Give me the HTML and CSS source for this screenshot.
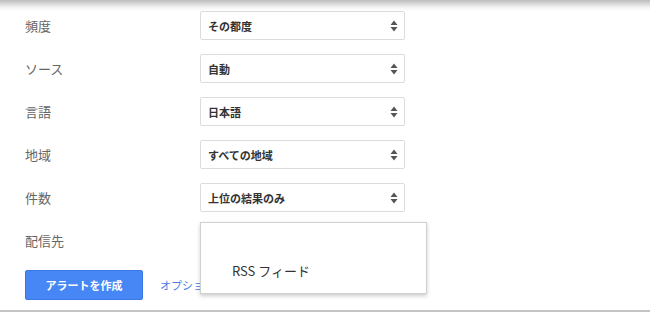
FILE: index.html
```html
<!doctype html>
<html>
 <head>
  <meta charset="UTF-8">
  <title>アラートを作成</title>
  <link rel="stylesheet" href="styles.css">
 </head>
 <body>
  <div class="shade"></div>
  <div class="form">
   <div class="row">
    <div class="label">頻度</div>
    <div class="select"><span>その都度</span><svg class="arrows" width="8" height="12" viewBox="0 0 8 12"><path d="M4 0.5L7.5 5H0.5Z M4 11.5L7.5 7H0.5Z" fill="#555"/></svg></div>
   </div>
   <div class="row">
    <div class="label">ソース</div>
    <div class="select"><span>自動</span><svg class="arrows" width="8" height="12" viewBox="0 0 8 12"><path d="M4 0.5L7.5 5H0.5Z M4 11.5L7.5 7H0.5Z" fill="#555"/></svg></div>
   </div>
   <div class="row">
    <div class="label">言語</div>
    <div class="select"><span>日本語</span><svg class="arrows" width="8" height="12" viewBox="0 0 8 12"><path d="M4 0.5L7.5 5H0.5Z M4 11.5L7.5 7H0.5Z" fill="#555"/></svg></div>
   </div>
   <div class="row">
    <div class="label">地域</div>
    <div class="select"><span>すべての地域</span><svg class="arrows" width="8" height="12" viewBox="0 0 8 12"><path d="M4 0.5L7.5 5H0.5Z M4 11.5L7.5 7H0.5Z" fill="#555"/></svg></div>
   </div>
   <div class="row">
    <div class="label">件数</div>
    <div class="select"><span>上位の結果のみ</span><svg class="arrows" width="8" height="12" viewBox="0 0 8 12"><path d="M4 0.5L7.5 5H0.5Z M4 11.5L7.5 7H0.5Z" fill="#555"/></svg></div>
   </div>
   <div class="row delivery">
    <div class="label">配信先</div>
    <div class="select"></div>
    <!-- 開いたドロップダウン -->
    <ul class="menu">
     <li></li>
     <li>RSS フィード</li>
    </ul>
   </div>
   <div class="actions">
    <div class="button">アラートを作成</div>
    <a class="link" href="#">オプションを表示</a>
   </div>
  </div>
 </body>
</html>
```

FILE: styles.css
```css
*{
	margin:0;
	padding:0;
	box-sizing:border-box;
}
ul{
	list-style:none;
}
body{
	font-family:"Noto Sans CJK JP","Liberation Sans",sans-serif;
	background:#fff;
	color:#333;
}
.shade{
	height:11px;
	background:linear-gradient(to bottom,rgba(0,0,0,0.26),rgba(0,0,0,0.04) 70%,rgba(0,0,0,0));
}
.form{
	padding:0 25px 10px;
	border-bottom:2px solid #c4c4c4;
}
.row{
	position:relative;
	display:grid;
	grid-template-columns:175px 205px;
	align-items:center;
	height:29px;
	margin-bottom:14px;
}
.label{
	font-size:13px;
	color:#666;
}
.select{
	display:flex;
	align-items:center;
	justify-content:space-between;
	height:29px;
	padding:0 6px 0 7px;
	border:1px solid #dcdcdc;
	border-radius:2px;
	font-size:11px;
	font-weight:bold;
	color:#333;
}
.arrows{
	display:block;
}
.delivery{
	margin-bottom:15px;
}
.menu{
	position:absolute;
	left:175px;
	top:-4px;
	width:227px;
	height:72px;
	background:#fff;
	border:1px solid #d0d0d0;
	box-shadow:0 2px 4px rgba(0,0,0,0.2);
	z-index:1;
	padding-top:4px;
}
.menu>li{
	height:30px;
	line-height:30px;
	padding-left:31px;
	font-size:13px;
	color:#333;
}
.menu>li:last-child{
	margin-top:0;
	line-height:28px;
}
.actions{
	display:flex;
	align-items:center;
	gap:17px;
}
.button{
	width:118px;
	height:30px;
	line-height:28px;
	text-align:center;
	background:#4687f5;
	border:1px solid #3b79e4;
	border-radius:2px;
	color:#fff;
	font-size:11px;
	font-weight:bold;
}
.link{
	font-size:11px;
	color:#4a80e8;
	text-decoration:none;
}
```
